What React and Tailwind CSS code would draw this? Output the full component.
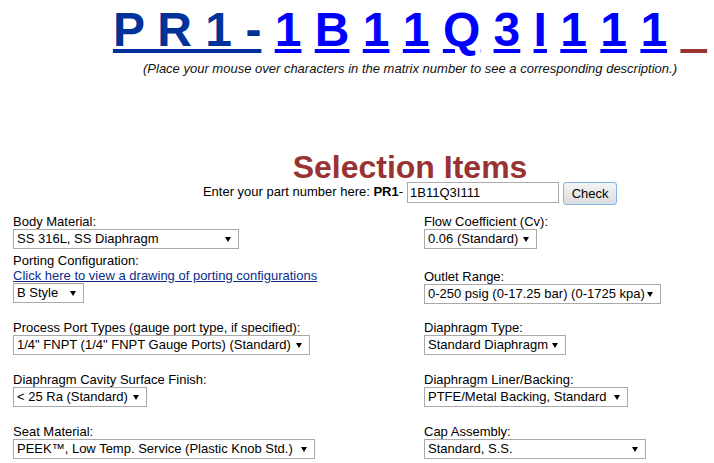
import { Fragment } from "react";

const matrix = ["1", "B", "1", "1", "Q", "3", "I", "1", "1", "1"];

// fake select box, same look as the windows one
const Select = ({ value, width }) => {
  return (
    <div
      className="relative h-[20px] border border-[#a9a9a9] bg-white pl-[3px] text-[13px] leading-[18px] text-black whitespace-nowrap"
      style={{ width }}
    >
      {value}
      <svg
        className="absolute right-[7px] top-[7px]"
        width={6}
        height={5}
        viewBox="0 0 6 5"
      >
        <polygon points="0,0 6,0 3,5" fill="#000" />
      </svg>
    </div>
  );
};

const Field = ({ label, value, width }) => (
  <div>
    <div className="text-[13px] leading-[15px] text-black">{label}</div>
    <Select value={value} width={width} />
  </div>
);

const App = () => {
  return (
    <div
      className="w-[714px] h-[463px] overflow-hidden bg-white text-black"
      style={{ fontFamily: '"Liberation Sans", Arial, sans-serif' }}
    >
      <div className="pl-[106px] text-center whitespace-nowrap">
        <div className="pt-[3px] text-[48px] font-bold leading-[54px]">
          <a className="text-[#003399] underline">P R 1 -</a>
          {matrix.map((c, i) => (
            <Fragment key={i}>
              {" "}
              <a className="text-[#0000ff] underline">{c}</a>
            </Fragment>
          ))}{" "}
          <a className="text-[#993333] underline">{"\u00a0\u00a0"}</a>
        </div>
        <p className="mt-[4px] text-[13px] italic leading-[15px] text-[#111]">
          (Place your mouse over characters in the matrix number to see a
          corresponding description.)
        </p>

        <h1 className="mt-[77px] text-[32px] font-bold leading-[29px] text-[#993333]">
          Selection Items
        </h1>
        <div className="flex justify-center items-start h-[23px]">
          <span className="mt-[2px] text-[13px] leading-[15px]">
            Enter your part number here: <b>PR1</b>-
          </span>
          <input
            className="ml-[4px] w-[152px] h-[21px] border border-[#a9a9a9] bg-white pl-[2px] text-[13px] outline-none"
            defaultValue="1B11Q3I111"
            readOnly
          />
          <button className="ml-[4px] w-[54px] h-[23px] border border-[#7eb4ea] rounded-[3px] bg-linear-to-b from-[#f4f4f4] to-[#dcdcdc] text-[13px] leading-[21px]">
            Check
          </button>
        </div>
      </div>

      <div className="mt-[9px] pl-[13px]">
        <div className="flex h-[90px]">
          <div className="w-[411px]">
            <Field label="Body Material:" value="SS 316L, SS Diaphragm" width={226} />
            <div className="mt-[4px] text-[13px] leading-[15px]">
              Porting Configuration:
            </div>
            <a className="block text-[13px] leading-[15px] text-[#0a2d8c] underline">
              Click here to view a drawing of porting configurations
            </a>
            <Select value="B Style" width={71} />
          </div>
          <div>
            <Field label="Flow Coefficient (Cv):" value="0.06 (Standard)" width={113} />
            <div className="mt-[20px]">
              <Field
                label="Outlet Range:"
                value="0-250 psig (0-17.25 bar) (0-1725 kpa)"
                width={237}
              />
            </div>
          </div>
        </div>

        <div className="mt-[16px] flex">
          <div className="w-[411px]">
            <Field
              label="Process Port Types (gauge port type, if specified):"
              value={'1/4" FNPT (1/4" FNPT Gauge Ports) (Standard)'}
              width={297}
            />
          </div>
          <Field label="Diaphragm Type:" value="Standard Diaphragm" width={142} />
        </div>

        <div className="mt-[17px] flex">
          <div className="w-[411px]">
            <Field
              label="Diaphragm Cavity Surface Finish:"
              value="< 25 Ra (Standard)"
              width={134}
            />
          </div>
          <Field
            label="Diaphragm Liner/Backing:"
            value="PTFE/Metal Backing, Standard"
            width={204}
          />
        </div>

        <div className="mt-[17px] flex">
          <div className="w-[411px]">
            <Field
              label="Seat Material:"
              value="PEEK™, Low Temp. Service (Plastic Knob Std.)"
              width={302}
            />
          </div>
          <Field label="Cap Assembly:" value="Standard, S.S." width={222} />
        </div>
      </div>
    </div>
  );
};

export default App;
